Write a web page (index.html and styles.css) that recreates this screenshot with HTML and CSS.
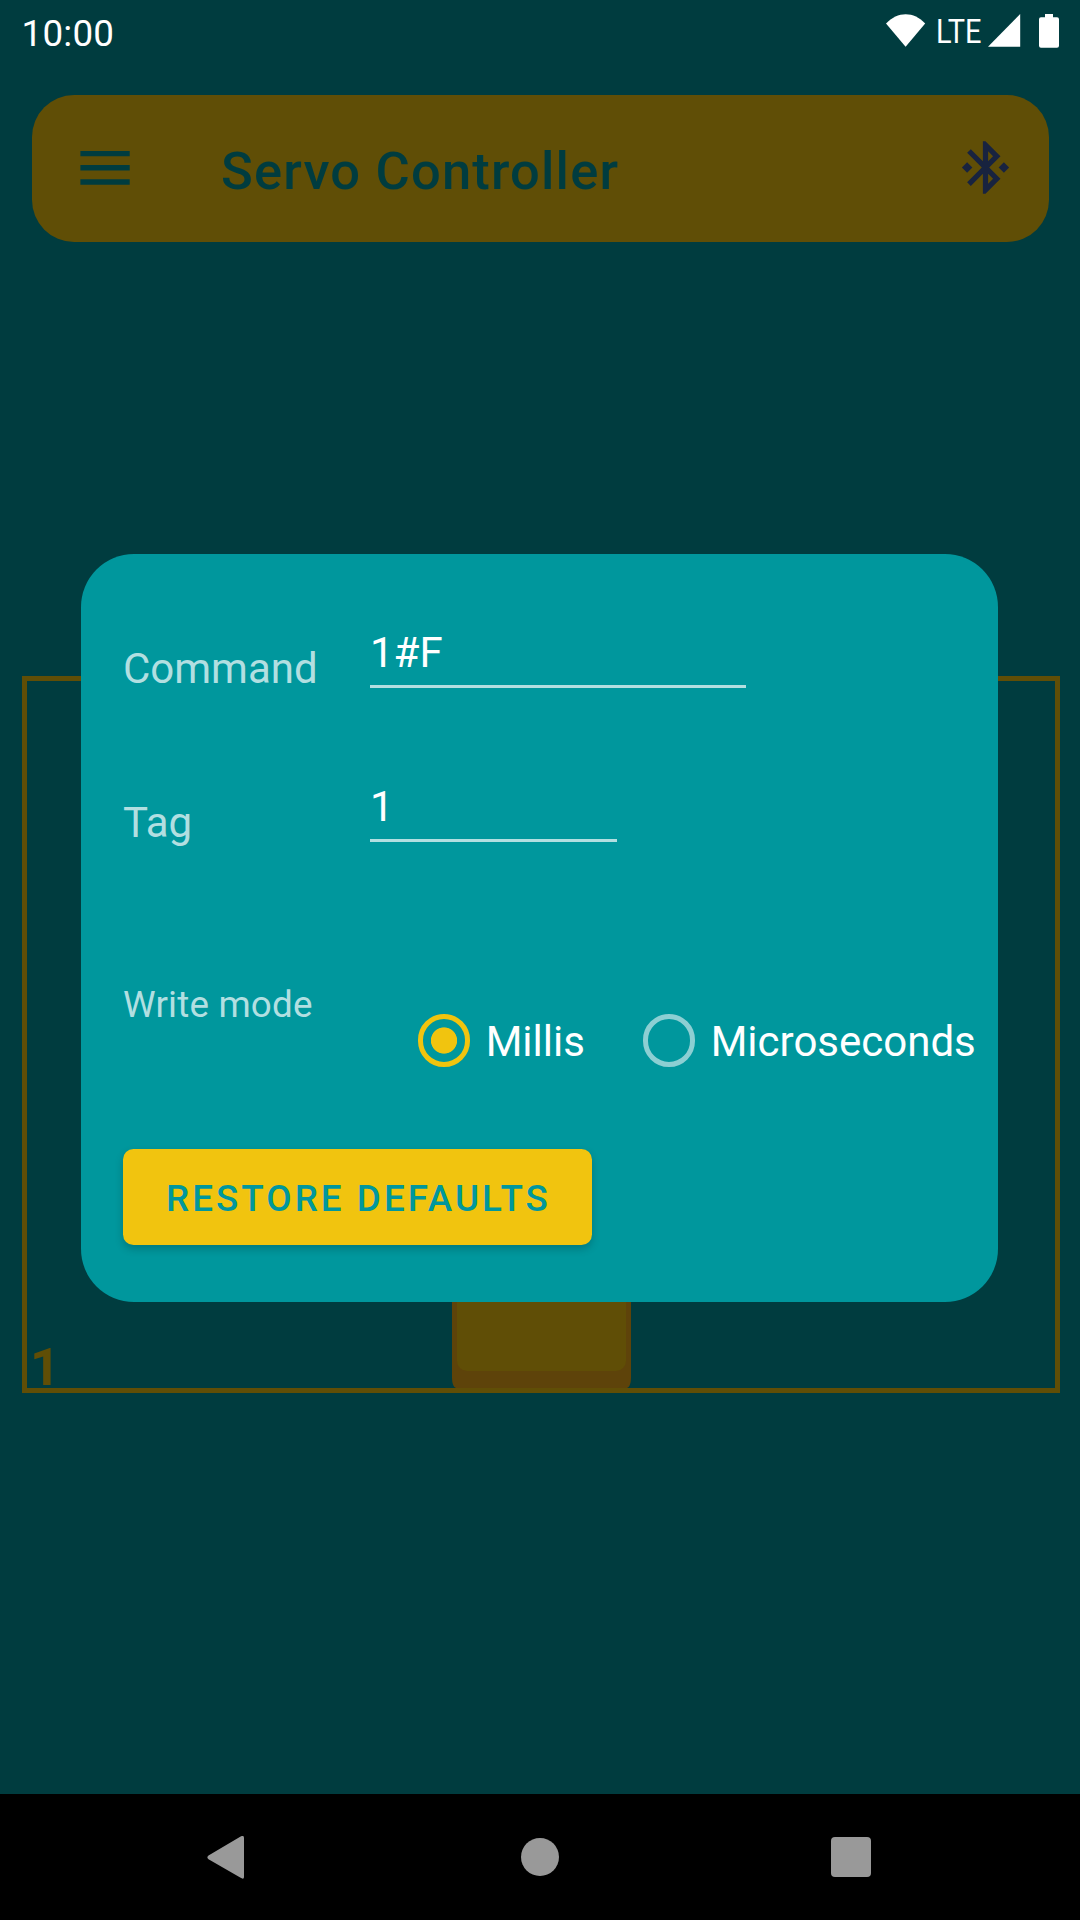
FILE: index.html
```html
<!DOCTYPE html>
<html lang="en">
<head>
<meta charset="utf-8">
<title>Servo Controller</title>
<link rel="stylesheet" href="styles.css">
</head>
<body>
<div class="screen">
  <div class="status-bar">
    <span class="clock">10:00</span>
    <svg class="wifi" width="40" height="33" viewBox="0 0 40 33"><path d="M0 9.5C11.500-3 28-3 39.200 9.500L19.600 32.800Z"/></svg>
    <span class="network">LTE</span>
    <svg class="signal" width="33" height="33" viewBox="0 0 33 33"><path d="M32.200 0V32.700H0Z"/></svg>
    <svg class="battery" width="20" height="34" viewBox="0 0 20 34"><path d="M6 0h8v3.200h4a2 2 0 0 1 2 2V31.700a2 2 0 0 1-2 2H2a2 2 0 0 1-2-2V5.200a2 2 0 0 1 2-2h4Z"/></svg>
  </div>

  <header class="app-bar">
    <svg class="menu" width="50" height="34" viewBox="0 0 50 34"><path d="M.4 0h49.300v5.200H.4zM.4 14h49.300v5.400H.4zM.4 28.300h49.300v5.500H.4z"/></svg>
    <h1 class="title">Servo Controller</h1>
    <svg class="bluetooth" width="63" height="63" viewBox="0 0 24 24"><path d="M7 12l-2-2-2 2 2 2 2-2zM17.710 7.710L12 2h-1v7.590L6.410 5 5 6.410 10.590 12 5 17.590 6.410 19 11 14.410V22h1l5.710-5.710-4.300-4.290 4.300-4.290zM13 5.830l1.880 1.880L13 9.590V5.830zm1.880 10.460L13 18.170v-3.760l1.880 1.880zM19 10l-2 2 2 2 2-2-2-2z"/></svg>
  </header>

  <main class="workspace">
    <section class="servo">
      <span class="servo-tag">1</span>
      <div class="knob"><div class="knob-face"></div></div>
    </section>
  </main>

  <nav class="nav-bar">
    <svg class="back" width="38" height="43" viewBox="0 0 38 43"><path d="M33.200.8Q37-1.500 37 2V41Q37 44 33.200 41.600L1.500 23.300Q-.8 21.300 1.500 19.500Z"/></svg>
    <span class="home"></span>
    <span class="recents"></span>
  </nav>

  <div class="dialog">
    <div class="row">
      <label class="label" for="command">Command</label>
      <input class="field" id="command" type="text" value="1#F">
    </div>
    <div class="row">
      <label class="label" for="tag">Tag</label>
      <input class="field field-short" id="tag" type="text" value="1">
    </div>
    <div class="row row-mode">
      <span class="label-small">Write mode</span>
      <div class="options">
        <div class="option"><span class="radio radio-on"></span>Millis</div>
        <div class="option"><span class="radio"></span>Microseconds</div>
      </div>
    </div>
    <button class="restore">RESTORE DEFAULTS</button>
  </div>
</div>
</body>
</html>
```
FILE: styles.css
```css
* { box-sizing: border-box; }

body {
  margin: 0;
  font-family: Roboto, sans-serif;
  background: #003c3f;
}

.screen {
  position: relative;
  display: flex;
  flex-direction: column;
  width: 1080px;
  height: 1920px;
  overflow: hidden;
  background: #003c3f;
}

.screen svg { display: block; flex: none; }

.status-bar {
  display: flex;
  align-items: flex-start;
  height: 63px;
  padding: 14px 21px 0;
  color: #fff;
  fill: #fff;
}

.clock {
  flex: 1;
  font-size: 36.75px;
  line-height: 39px;
  letter-spacing: 0.25px;
  padding-left: 0.5px;
}

.network {
  width: 62px;
  padding-left: 10px;
  font-size: 32.5px;
  line-height: 36px;
  transform: scaleX(0.89);
  transform-origin: 10px 0;
}

.signal { margin-right: 18px; }

.app-bar {
  display: flex;
  align-items: center;
  height: 147px;
  margin: 32px 31px 0 32px;
  padding: 0 32px 0 48px;
  border-radius: 42px;
  background: #604e06;
}

.menu {
  margin-bottom: 1px;
  fill: #003c3f;
}

.title {
  flex: 1;
  margin: 0 0 0 91px;
  font-size: 52.5px;
  font-weight: 500;
  line-height: 63px;
  letter-spacing: 1.18px;
  color: #003c3f;
  padding-top: 5px;
}

.bluetooth {
  margin-bottom: 3px;
  fill: #18233f;
}

.workspace {
  flex: 1;
  padding: 434px 20px 0 22px;
}

.servo {
  display: grid;
  grid-template-columns: 425px 179px 1fr;
  align-items: end;
  height: 717px;
  border: 5px solid #604e06;
}

.servo-tag {
  padding-left: 3px;
  font-size: 52.5px;
  font-weight: 700;
  line-height: 42px;
  color: #604e06;
}

.knob {
  height: 300px;
  padding: 5px 5px 17px;
  border-radius: 0 0 4px 4px / 0 0 10px 10px;
  background: #5e430a;
}

.knob-face {
  height: 100%;
  border-radius: 10px;
  background: #604e06;
}

.nav-bar {
  display: flex;
  align-items: center;
  justify-content: space-between;
  height: 126px;
  padding: 0 209px 0 207px;
  background: #000;
}

.back { fill: #999; }

.home {
  width: 38px;
  height: 38px;
  margin-left: 3px;
  border-radius: 50%;
  background: #999;
}

.recents {
  width: 40px;
  height: 40px;
  border-radius: 4px;
  background: #999;
}

.dialog {
  position: absolute;
  left: 81px;
  top: 554px;
  display: flex;
  flex-direction: column;
  align-items: flex-start;
  width: 917px;
  height: 748px;
  padding: 66px 0 0 42px;
  border-radius: 53px;
  background: #00979d;
}

.row {
  display: flex;
  align-items: flex-start;
  height: 73px;
  margin-bottom: 81px;
}

.label {
  width: 247px;
  padding-top: 24px;
  font-size: 42px;
  line-height: 49px;
  color: #b2dfe1;
}

.field {
  width: 376px;
  height: 68px;
  margin: 0;
  padding: 0;
  border: 0;
  border-bottom: 3px solid #b2dfe1;
  outline: 0;
  background: none;
  font: 42px/65px Roboto, sans-serif;
  color: #fff;
}

.field-short { width: 247px; }

.row-mode {
  height: 87px;
  margin: 52px 0 82px;
}

.label-small {
  width: 294.7px;
  font-size: 36.75px;
  line-height: 49px;
  letter-spacing: 0.2px;
  color: #b2dfe1;
}

.options {
  display: flex;
  padding-top: 34px;
}

.option {
  display: flex;
  width: 225px;
  font-size: 42px;
  line-height: 55px;
  white-space: nowrap;
  color: #fff;
}

.radio {
  flex: none;
  width: 52.5px;
  height: 52.5px;
  margin-right: 15.5px;
  border: 5.25px solid #8ccfd3;
  border-radius: 50%;
}

.radio-on {
  border-color: #f1c40f;
  background: radial-gradient(circle, #f1c40f 12.7px, transparent 13.5px);
}

.restore {
  width: 469px;
  height: 96px;
  padding: 3px 0 0 2px;
  border: 0;
  border-radius: 10.5px;
  background: #f1c40f;
  box-shadow: 0 4px 8px rgba(0, 0, 0, 0.2);
  font: 500 36.75px/93px Roboto, sans-serif;
  letter-spacing: 3.05px;
  color: #00979d;
}
```
